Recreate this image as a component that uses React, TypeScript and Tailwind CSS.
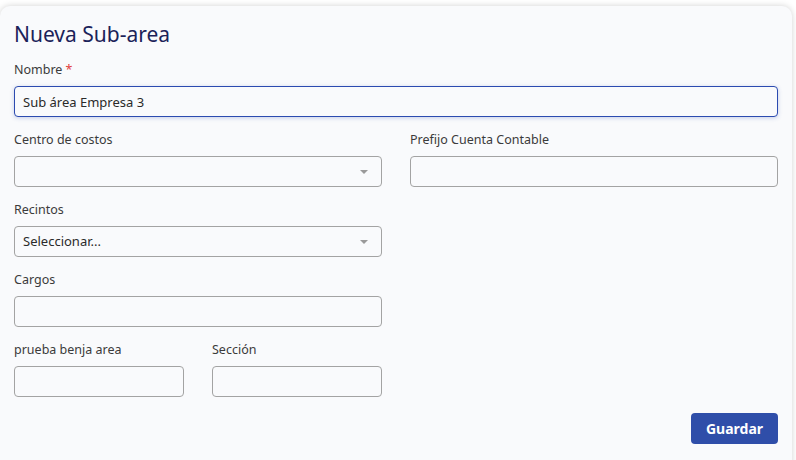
import React from "react";

const font = { fontFamily: '"Noto Sans", "Open Sans", Arial, sans-serif' };

function Label({ text, required }: { text: string; required?: boolean }) {
  return (
    <label className="block text-[12.5px] leading-[18px] text-[#3b3b3b] mb-[7px]">
      {text}
      {required && <span className="text-[#e23c3c] ml-[3px]">*</span>}
    </label>
  );
}

function TextInput({ value, focused }: { value?: string; focused?: boolean }) {
  return (
    <input
      readOnly
      value={value ?? ""}
      className={
        "block w-full h-[31px] rounded-[4px] px-[8px] text-[13px] text-[#2a2a2a] bg-[#f9fafc] outline-none " +
        (focused
          ? "border border-[#2c4bb0] shadow-[0_1px_4px_rgba(44,75,176,0.25)]"
          : "border border-[#a3a3a3]")
      }
      style={font}
    />
  );
}

function SelectBox({ placeholder }: { placeholder?: string }) {
  return (
    <div className="flex items-center justify-between h-[31px] rounded-[4px] border border-[#a3a3a3] pl-[8px] pr-[13px] bg-[#f9fafc]">
      <span className="text-[13px] text-[#2a2a2a]">{placeholder ?? ""}</span>
      <span className="w-0 h-0 border-l-[4px] border-r-[4px] border-t-[4px] border-l-transparent border-r-transparent border-t-[#9a9a9a]" />
    </div>
  );
}

export default function App() {
  return (
    <div className="w-[796px] h-[460px] bg-white pt-[6px] overflow-hidden" style={font}>
      <div className="w-[792px] h-[470px] bg-[#f9fafc] rounded-[10px] shadow-[0_0_6px_rgba(0,0,0,0.18)] px-[14px] pt-[13px]">
        <h1 className="text-[21px] leading-[30px] text-[#1b2259] font-normal mb-[12px]">Nueva Sub-area</h1>

        <div className="mb-[14px]">
          <Label text="Nombre" required />
          <TextInput value="Sub área Empresa 3" focused />
        </div>

        <div className="grid grid-cols-2 gap-x-[28px]">
          <div className="flex flex-col gap-[14px]">
            <div>
              <Label text="Centro de costos" />
              <SelectBox />
            </div>
            <div>
              <Label text="Recintos" />
              <SelectBox placeholder="Seleccionar..." />
            </div>
            <div>
              <Label text="Cargos" />
              <TextInput />
            </div>
            <div className="grid grid-cols-2 gap-x-[28px]">
              <div>
                <Label text="prueba benja area" />
                <TextInput />
              </div>
              <div>
                <Label text="Sección" />
                <TextInput />
              </div>
            </div>
          </div>
          <div>
            <Label text="Prefijo Cuenta Contable" />
            <TextInput />
          </div>
        </div>

        <div className="flex justify-end mt-[16px]">
          <button className="w-[87px] h-[31px] rounded-[4px] bg-[#2f4ea9] text-white text-[14px] font-bold">
            Guardar
          </button>
        </div>
      </div>
    </div>
  );
}
